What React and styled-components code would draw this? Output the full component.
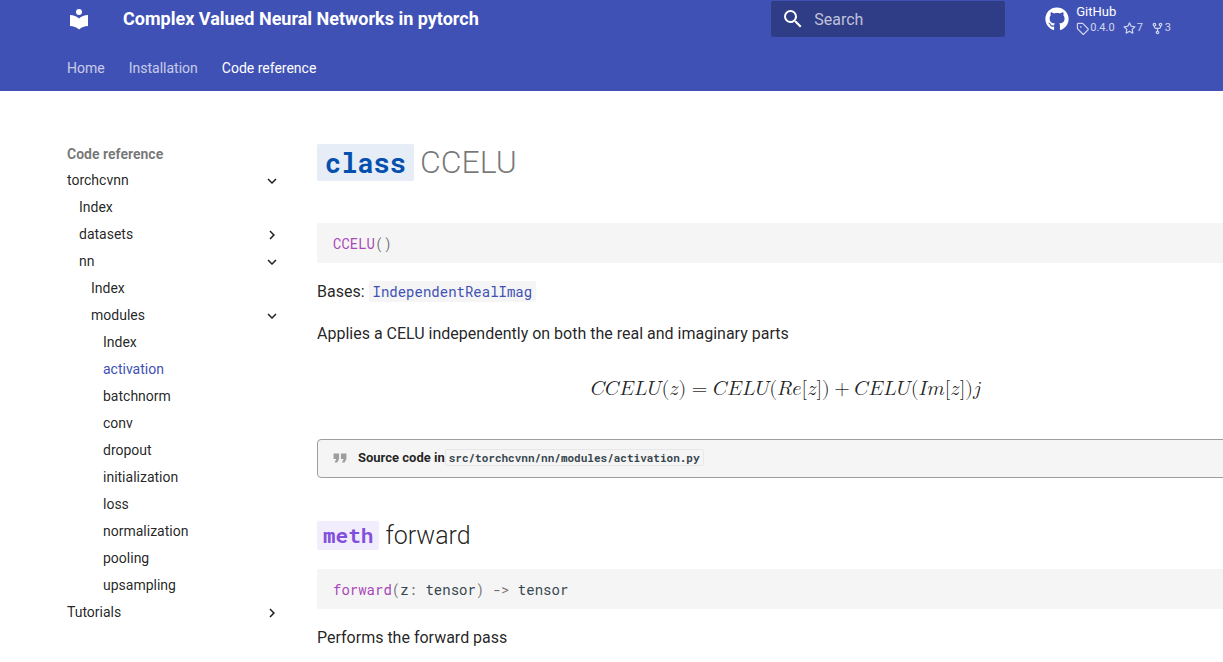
import React from "react";
import styled, { createGlobalStyle } from "styled-components";
import { FaGithub } from "react-icons/fa";

const GlobalStyle = createGlobalStyle`
  *, *::before, *::after { box-sizing: border-box; }
  body {
    margin: 0;
    overflow: hidden;
    background: #fff;
    color: rgba(0, 0, 0, 0.87);
    font-family: Roboto, "Liberation Sans", sans-serif;
    font-size: 16px;
    line-height: 26px;
  }
  a { color: inherit; text-decoration: none; }
`;

const mono = `"Roboto Mono", "DejaVu Sans Mono", "Liberation Mono", monospace`;

const icons = {
  library:
    "M12 8a3 3 0 0 0 3-3 3 3 0 0 0-3-3 3 3 0 0 0-3 3 3 3 0 0 0 3 3m0 3.54C9.64 9.35 6.5 8 3 8v11c3.5 0 6.64 1.35 9 3.54 2.36-2.19 5.5-3.54 9-3.54V8c-3.5 0-6.64 1.35-9 3.54Z",
  search:
    "M9.5 3A6.5 6.5 0 0 1 16 9.5c0 1.61-.59 3.09-1.56 4.23l.27.27h.79l5 5-1.5 1.5-5-5v-.79l-.27-.27A6.516 6.516 0 0 1 9.5 16 6.5 6.5 0 0 1 3 9.5 6.5 6.5 0 0 1 9.5 3m0 2C7 5 5 7 5 9.5S7 14 9.5 14 14 12 14 9.5 12 5 9.5 5Z",
  chevron: "M8.59 16.58 13.17 12 8.59 7.41 10 6l6 6-6 6-1.41-1.42Z",
  quote: "M14 17h3l2-4V7h-6v6h3M6 17h3l2-4V7H5v6h3z",
  tag: "M1 7.775V2.75C1 1.784 1.784 1 2.75 1h5.025c.464 0 .91.184 1.238.513l6.25 6.25a1.75 1.75 0 0 1 0 2.474l-5.026 5.026a1.75 1.75 0 0 1-2.474 0l-6.25-6.25A1.752 1.752 0 0 1 1 7.775Zm1.5 0c0 .066.026.13.073.177l6.25 6.25a.25.25 0 0 0 .354 0l5.025-5.025a.25.25 0 0 0 0-.354l-6.25-6.25a.25.25 0 0 0-.177-.073H2.75a.25.25 0 0 0-.25.25ZM6 5a1 1 0 1 1 0 2 1 1 0 0 1 0-2Z",
  star: "M8 .25a.75.75 0 0 1 .673.418l1.882 3.815 4.21.612a.75.75 0 0 1 .416 1.279l-3.046 2.97.719 4.192a.751.751 0 0 1-1.088.791L8 12.347l-3.766 1.98a.75.75 0 0 1-1.088-.79l.72-4.194L.818 6.374a.75.75 0 0 1 .416-1.28l4.21-.611L7.327.668A.75.75 0 0 1 8 .25Zm0 2.445L6.615 5.5a.75.75 0 0 1-.564.41l-3.097.45 2.24 2.184a.75.75 0 0 1 .216.664l-.528 3.084 2.769-1.456a.75.75 0 0 1 .698 0l2.77 1.456-.53-3.084a.75.75 0 0 1 .216-.664l2.24-2.183-3.096-.45a.75.75 0 0 1-.564-.41L8 2.694Z",
  fork: "M5 5.372v.878c0 .414.336.75.75.75h4.5a.75.75 0 0 0 .75-.75v-.878a2.25 2.25 0 1 1 1.5 0v.878a2.25 2.25 0 0 1-2.25 2.25h-1.5v2.128a2.251 2.251 0 1 1-1.5 0V8.5h-1.5A2.25 2.25 0 0 1 3.5 6.25v-.878a2.25 2.25 0 1 1 1.5 0ZM5 3.25a.75.75 0 1 0-1.5 0 .75.75 0 0 0 1.5 0Zm6.75.75a.75.75 0 1 0 0-1.5.75.75 0 0 0 0 1.5Zm-3 8.75a.75.75 0 1 0-1.5 0 .75.75 0 0 0 1.5 0Z",
};

const Svg = styled.svg`
  flex: none;
  display: block;
  fill: currentColor;
  width: ${(p) => p.$size}px;
  height: ${(p) => p.$size}px;
`;

const Icon = ({ name, size = 24, box = 24, className }) => (
  <Svg className={className} $size={size} viewBox={`0 0 ${box} ${box}`} aria-hidden="true">
    <path d={icons[name]} />
  </Svg>
);

const Header = styled.header`
  background: #4051b5;
  color: #fff;
  padding: 0 52px 0 67px;
`;

const TopBar = styled.div`
  display: flex;
  align-items: center;
  height: 38px;
`;

const Logo = styled.a`
  margin-right: 32px;
`;

const SiteTitle = styled.div`
  flex: 1;
  font-size: 18px;
  font-weight: 700;
  white-space: nowrap;
`;

const SearchBox = styled.label`
  display: flex;
  align-items: center;
  gap: 9px;
  width: 234px;
  height: 36px;
  margin-right: 40px;
  padding: 0 10px;
  border-radius: 2px;
  background: rgba(0, 0, 0, 0.26);
`;

const SearchInput = styled.input`
  flex: 1;
  min-width: 0;
  padding: 1px 0 0;
  border: 0;
  outline: 0;
  background: transparent;
  color: #fff;
  font: inherit;
  &::placeholder { color: rgba(255, 255, 255, 0.7); opacity: 1; }
`;

const Source = styled.a`
  display: flex;
  align-items: center;
  gap: 7px;
  font-size: 13px;
  line-height: 16px;
`;

const Repository = styled.div`
  padding-top: 2px;
`;

const Facts = styled.ul`
  display: flex;
  gap: 8px;
  margin: 0;
  padding: 0;
  list-style: none;
  font-size: 11px;
  opacity: 0.75;
`;

const Fact = styled.li`
  display: flex;
  align-items: center;
  gap: 1px;
`;

const Tabs = styled.nav`
  display: flex;
  gap: 24px;
  height: 53px;
  padding-top: 17px;
  font-size: 14px;
`;

const Tab = styled.a`
  opacity: ${(p) => (p.$active ? 1 : 0.7)};
`;

const Page = styled.div`
  display: grid;
  grid-template-columns: 214px minmax(0, 1fr);
  gap: 36px;
  padding: 50px 0 0 67px;
`;

const Sidebar = styled.nav`
  font-size: 14px;
  line-height: 27px;
`;

const SidebarTitle = styled.div`
  line-height: 26px;
  font-weight: 700;
  color: rgba(0, 0, 0, 0.54);
`;

const NavList = styled.ul`
  margin: 0;
  padding: 0 0 0 ${(p) => (p.$nested ? 12 : 0)}px;
  list-style: none;
`;

const NavLink = styled.a`
  display: flex;
  align-items: center;
  justify-content: space-between;
  color: ${(p) => (p.$active ? "#4051b5" : "inherit")};
`;

const Chevron = styled(Icon)`
  transform: rotate(${(p) => (p.open ? 90 : 0)}deg);
`;

/* The article runs on past the right edge of the viewport. */
const Article = styled.main`
  margin-right: -32px;
`;

const Title = styled.h1`
  display: flex;
  align-items: center;
  gap: 6px;
  height: 42px;
  margin: 0 0 40px;
  color: rgba(0, 0, 0, 0.54);
  font-size: 32px;
  font-weight: 300;
`;

const Subtitle = styled.h2`
  display: flex;
  align-items: center;
  gap: 6px;
  height: 35px;
  margin: 40px 0 16px;
  font-size: 25px;
  font-weight: 300;
`;

const Symbol = styled.code`
  border-radius: 2px;
  font-family: ${mono};
  font-weight: 700;
  ${(p) =>
    p.$kind === "class"
      ? "padding: 0 8px; color: #0550ae; background: #e6edf7; font-size: 27px; line-height: 37px;"
      : "padding: 0 6px; color: #8250df; background: #f2edfc; font-size: 21px; line-height: 29px;"}
`;

const Signature = styled.pre`
  margin: 0 0 16px;
  padding: 1px 16px 0;
  border-radius: 2px;
  background: #f5f5f5;
  color: #36464e;
  font-family: ${mono};
  font-size: 14px;
  line-height: 39px;
`;

const Code = styled.code`
  font-family: inherit;
`;

const Fn = styled.span`
  color: #a846b9;
`;

const Punct = styled.span`
  color: rgba(0, 0, 0, 0.54);
`;

const Paragraph = styled.p`
  margin: 0 0 16px;
`;

const CodeLink = styled.a`
  padding: 1px 4px;
  border-radius: 2px;
  background: #f5f5f5;
  color: #4051b5;
  font-family: ${mono};
  font-size: 14px;
`;

const Formula = styled.div`
  display: flex;
  align-items: center;
  justify-content: center;
  height: 26px;
  margin: 30px 0 36px;
`;

const MathExpression = styled("math")`
  font-family: "Latin Modern Math", "Liberation Serif", serif;
  font-size: 20px;
`;

const SourceCode = styled.details`
  border: 1px solid #9e9e9e;
  border-radius: 4px;
  background: #f5f5f5;
  font-size: 13px;
  font-weight: 700;
`;

const Summary = styled.summary`
  display: flex;
  align-items: center;
  height: 37px;
  padding: 0 11px 2px;
  list-style: none;
  &::-webkit-details-marker { display: none; }
`;

const QuoteIcon = styled(Icon)`
  margin-right: 7px;
  color: #9e9e9e;
`;

const FilePath = styled.code`
  padding: 0 3px;
  border: 1px solid #e8e8e8;
  border-radius: 2px;
  color: #36464e;
  font-family: ${mono};
  font-size: 11px;
  line-height: 15px;
`;

const modules = [
  "Index",
  "activation",
  "batchnorm",
  "conv",
  "dropout",
  "initialization",
  "loss",
  "normalization",
  "pooling",
  "upsampling",
].map((label) => ({ label, active: label === "activation" }));

const tree = [
  {
    label: "torchcvnn",
    children: [
      { label: "Index" },
      { label: "datasets", closed: true },
      { label: "nn", children: [{ label: "Index" }, { label: "modules", children: modules }] },
    ],
  },
  { label: "Tutorials", closed: true },
];

const Tree = ({ items, nested }) => (
  <NavList $nested={nested}>
    {items.map((item) => (
      <li key={item.label}>
        <NavLink href="#" $active={item.active}>
          {item.label}
          {(item.children || item.closed) && (
            <Chevron name="chevron" size={18} open={Boolean(item.children)} />
          )}
        </NavLink>
        {item.children && <Tree items={item.children} nested />}
      </li>
    ))}
  </NavList>
);

/* Sets each letter as an identifier and every other mark as an operator. */
const Equation = ({ source }) => (
  <MathExpression display="block">
    {[...source].map((char, i) =>
      /[a-z]/i.test(char) ? (
        <mi key={i}>{char}</mi>
      ) : (
        <mo key={i} stretchy="false">{char}</mo>
      )
    )}
  </MathExpression>
);

export default function App() {
  return (
    <>
      <GlobalStyle />
      <Header>
        <TopBar>
          <Logo href="#" aria-label="Complex Valued Neural Networks in pytorch">
            <Icon name="library" />
          </Logo>
          <SiteTitle>Complex Valued Neural Networks in pytorch</SiteTitle>
          <SearchBox>
            <Icon name="search" />
            <SearchInput type="text" placeholder="Search" aria-label="Search" />
          </SearchBox>
          <Source href="#">
            <FaGithub size={24} aria-hidden="true" />
            <Repository>
              GitHub
              <Facts>
                <Fact><Icon name="tag" size={13} box={16} />0.4.0</Fact>
                <Fact><Icon name="star" size={13} box={16} />7</Fact>
                <Fact><Icon name="fork" size={13} box={16} />3</Fact>
              </Facts>
            </Repository>
          </Source>
        </TopBar>
        <Tabs>
          <Tab href="#">Home</Tab>
          <Tab href="#">Installation</Tab>
          <Tab href="#" $active>Code reference</Tab>
        </Tabs>
      </Header>
      <Page>
        <Sidebar aria-label="Code reference">
          <SidebarTitle>Code reference</SidebarTitle>
          <Tree items={tree} />
        </Sidebar>
        <Article>
          <Title><Symbol $kind="class">class</Symbol>CCELU</Title>
          <Signature><Code><Fn>CCELU</Fn><Punct>()</Punct></Code></Signature>
          <Paragraph>Bases: <CodeLink href="#">IndependentRealImag</CodeLink></Paragraph>
          <Paragraph>Applies a CELU independently on both the real and imaginary parts</Paragraph>
          <Formula>
            <Equation source="CCELU(z)=CELU(Re[z])+CELU(Im[z])j" />
          </Formula>
          <SourceCode>
            <Summary>
              <QuoteIcon name="quote" size={22} />
              Source code in <FilePath>src/torchcvnn/nn/modules/activation.py</FilePath>
            </Summary>
          </SourceCode>
          <Subtitle><Symbol $kind="meth">meth</Symbol>forward</Subtitle>
          <Signature>
            <Code>
              <Fn>forward</Fn><Punct>(</Punct>z<Punct>:</Punct> tensor<Punct>)</Punct> <Punct>-&gt;</Punct> tensor
            </Code>
          </Signature>
          <Paragraph>Performs the forward pass</Paragraph>
        </Article>
      </Page>
    </>
  );
}
